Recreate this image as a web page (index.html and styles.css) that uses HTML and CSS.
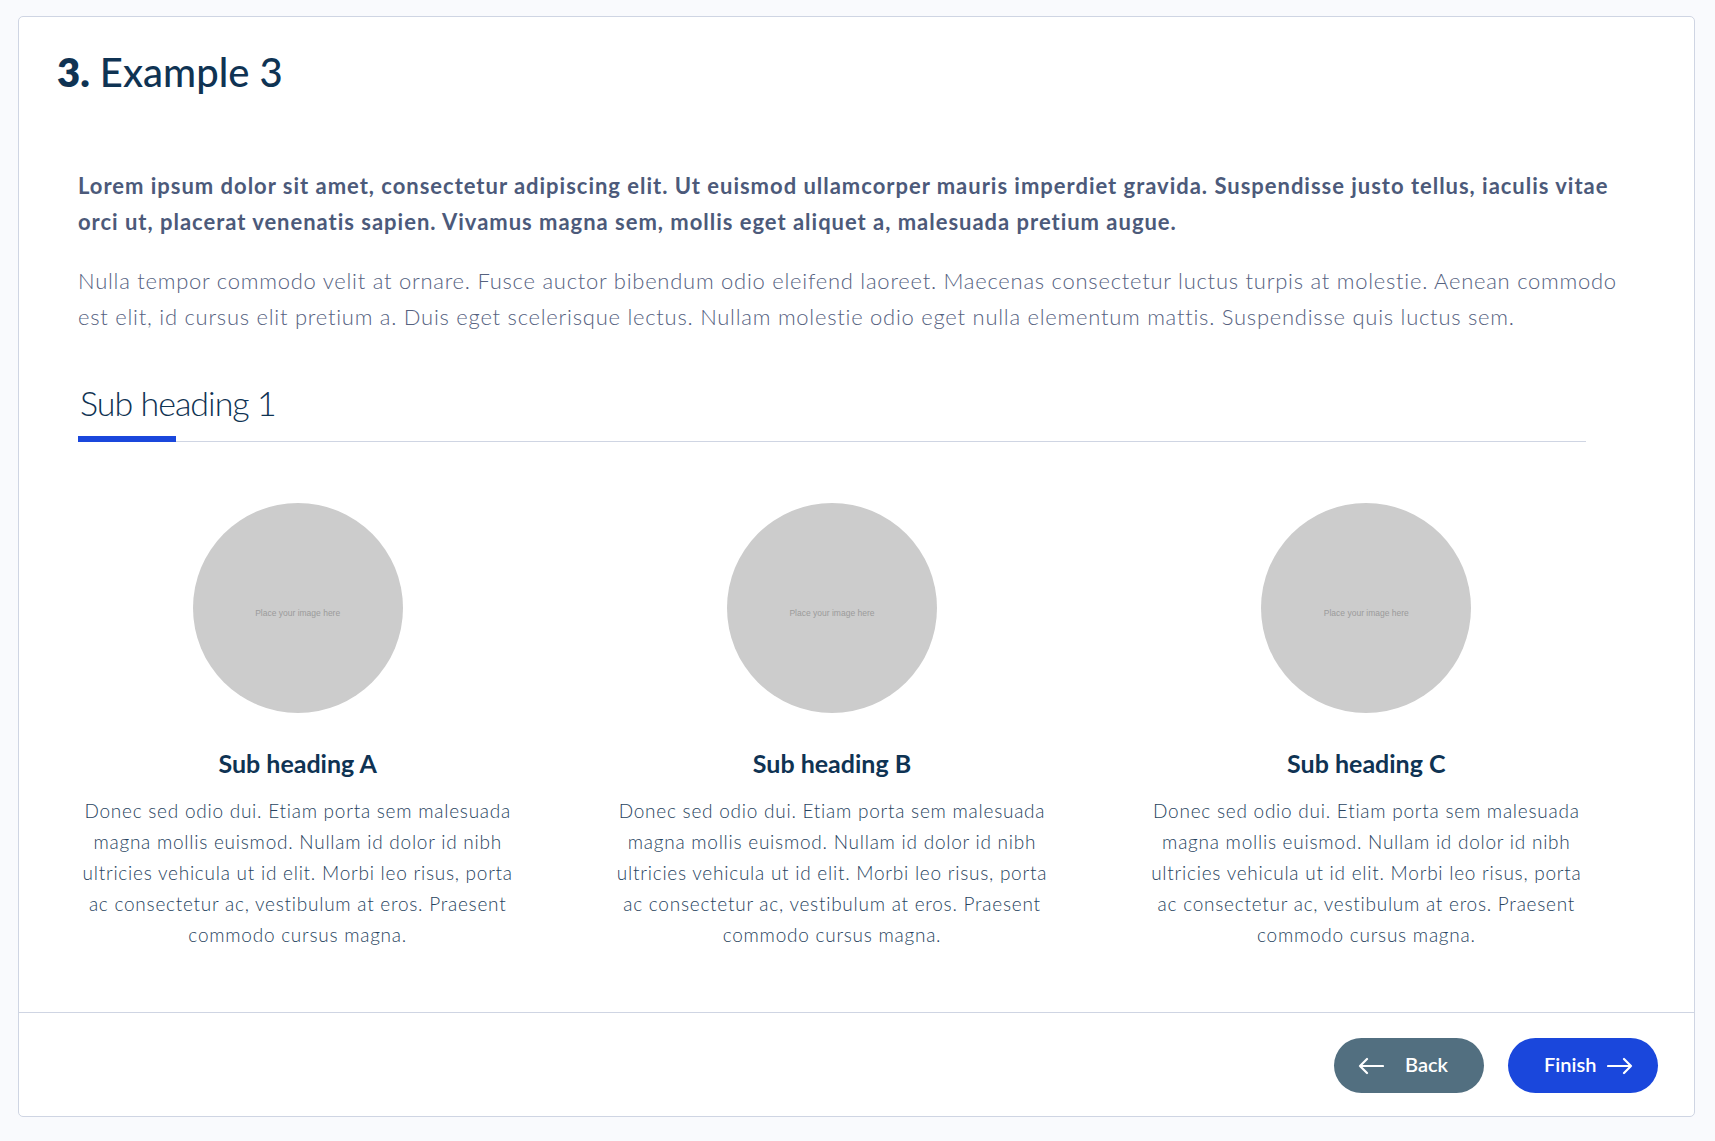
FILE: index.html
```html
<!DOCTYPE html>
<html lang="en">
<head>
  <meta charset="UTF-8" />
  <meta name="viewport" content="width=device-width, initial-scale=1.0"/>
  <title>Example 3</title>
  <link rel="stylesheet" href="styles.css">
</head>
<body>
  <main class="card">
    <header class="card-head">
      <h1 class="step-title"><b>3.</b> Example 3</h1>
    </header>

    <section class="card-body">
      <p class="lead">Lorem ipsum dolor sit amet, consectetur adipiscing elit. Ut euismod ullamcorper mauris imperdiet gravida. Suspendisse justo tellus, iaculis vitae orci ut, placerat venenatis sapien. Vivamus magna sem, mollis eget aliquet a, malesuada pretium augue.</p>
      <p class="text">Nulla tempor commodo velit at ornare. Fusce auctor bibendum odio eleifend laoreet. Maecenas consectetur luctus turpis at molestie. Aenean commodo est elit, id cursus elit pretium a. Duis eget scelerisque lectus. Nullam molestie odio eget nulla elementum mattis. Suspendisse quis luctus sem.</p>

      <div class="section">
        <h2 class="section-title">Sub heading 1</h2>

        <div class="features">
          <div class="feature">
            <div class="thumb"><span>Place your image here</span></div>
            <h3>Sub heading A</h3>
            <p>Donec sed odio dui. Etiam porta sem malesuada magna mollis euismod. Nullam id dolor id nibh ultricies vehicula ut id elit. Morbi leo risus, porta ac consectetur ac, vestibulum at eros. Praesent commodo cursus magna.</p>
          </div>
          <div class="feature">
            <div class="thumb"><span>Place your image here</span></div>
            <h3>Sub heading B</h3>
            <p>Donec sed odio dui. Etiam porta sem malesuada magna mollis euismod. Nullam id dolor id nibh ultricies vehicula ut id elit. Morbi leo risus, porta ac consectetur ac, vestibulum at eros. Praesent commodo cursus magna.</p>
          </div>
          <div class="feature">
            <div class="thumb"><span>Place your image here</span></div>
            <h3>Sub heading C</h3>
            <p>Donec sed odio dui. Etiam porta sem malesuada magna mollis euismod. Nullam id dolor id nibh ultricies vehicula ut id elit. Morbi leo risus, porta ac consectetur ac, vestibulum at eros. Praesent commodo cursus magna.</p>
          </div>
        </div>
      </div>
    </section>

    <footer class="card-foot">
      <button class="btn btn-back" type="button">
        <svg width="26" height="18" viewBox="0 0 26 18" fill="none" stroke="currentColor" stroke-width="2.2" stroke-linecap="round" stroke-linejoin="round"><path d="M25 9H2M9 2 2 9l7 7"/></svg>
        <span>Back</span>
      </button>
      <button class="btn btn-next" type="button">
        <span>Finish</span>
        <svg width="26" height="18" viewBox="0 0 26 18" fill="none" stroke="currentColor" stroke-width="2.2" stroke-linecap="round" stroke-linejoin="round"><path d="M1 9h23M17 2l7 7-7 7"/></svg>
      </button>
    </footer>
  </main>
</body>
</html>
```

FILE: styles.css
```css
* {
  box-sizing: border-box;
}

html, body {
  height: 100%;
}

body {
  margin: 0;
  padding: 16px 20px 24px 18px;
  display: flex;
  flex-direction: column;
  font-family: "Lato", "Open Sans", sans-serif;
  background-color: #f9fafd;
  color: #0f3353;
}

.card {
  flex: 1;
  display: flex;
  flex-direction: column;
  background: #fff;
  border: 1px solid #cfd5e3;
  border-radius: 5px;
}

.card-head {
  padding: 31px 38px 0;
}

.step-title {
  margin: 0;
  font-size: 40px;
  line-height: 48px;
  font-weight: 500;
  color: #0f3353;
}

.step-title b {
  font-weight: 800;
}

.card-body {
  flex: 1;
  padding: 72px 56px 0 59px;
}

.lead {
  margin: 0 0 23px;
  font-size: 22px;
  line-height: 36px;
  font-weight: 700;
  letter-spacing: 0.98px;
  color: #4c5a7a;
}

.text {
  margin: 0;
  font-size: 22px;
  line-height: 36px;
  font-weight: 300;
  letter-spacing: 0.74px;
  color: #56627f;
}

.section {
  max-width: 1508px;
  margin-top: 47px;
}

.section-title {
  position: relative;
  margin: 0;
  padding: 0 0 17px 2px;
  font-size: 34px;
  line-height: 42px;
  font-weight: 300;
  letter-spacing: -1px;
  color: #0f3353;
  border-bottom: 1px solid #cfd5e3;
}

/* active tab marker */
.section-title::after {
  content: "";
  position: absolute;
  left: 0;
  bottom: -1px;
  width: 98px;
  height: 6px;
  background: #1a47dc;
}

.features {
  display: grid;
  grid-template-columns: repeat(3, 1fr);
  gap: 95px;
  margin-top: 61px;
}

.feature {
  display: flex;
  flex-direction: column;
  align-items: center;
  text-align: center;
}

.thumb {
  width: 210px;
  height: 210px;
  border-radius: 50%;
  background: #cccccc;
  display: flex;
  align-items: center;
  justify-content: center;
  padding-top: 9px;
}

.thumb span {
  font-family: "Liberation Sans", Arial, sans-serif;
  font-size: 8.5px;
  color: #9b9b9b;
}

.feature h3 {
  margin: 35px 0 0;
  font-size: 25px;
  line-height: 30px;
  font-weight: 700;
  color: #0f3353;
}

.feature p {
  margin: 17px 0 0;
  font-size: 19px;
  line-height: 31px;
  font-weight: 300;
  letter-spacing: 0.75px;
  color: #284460;
}

.card-foot {
  display: flex;
  justify-content: flex-end;
  gap: 24px;
  padding: 25px 36px 23px;
  border-top: 1px solid #cfd5e3;
}

.btn {
  display: flex;
  align-items: center;
  width: 150px;
  height: 55px;
  border: 0;
  border-radius: 28px;
  font-family: inherit;
  font-size: 20px;
  font-weight: 600;
  color: #fff;
  cursor: pointer;
}

.btn span {
  padding-bottom: 3px;
}

.btn-back {
  background: #526f80;
  padding: 0 0 0 24px;
  gap: 21px;
}

.btn-next {
  background: #1a47dc;
  padding: 0 0 0 36px;
  gap: 11px;
}
```
